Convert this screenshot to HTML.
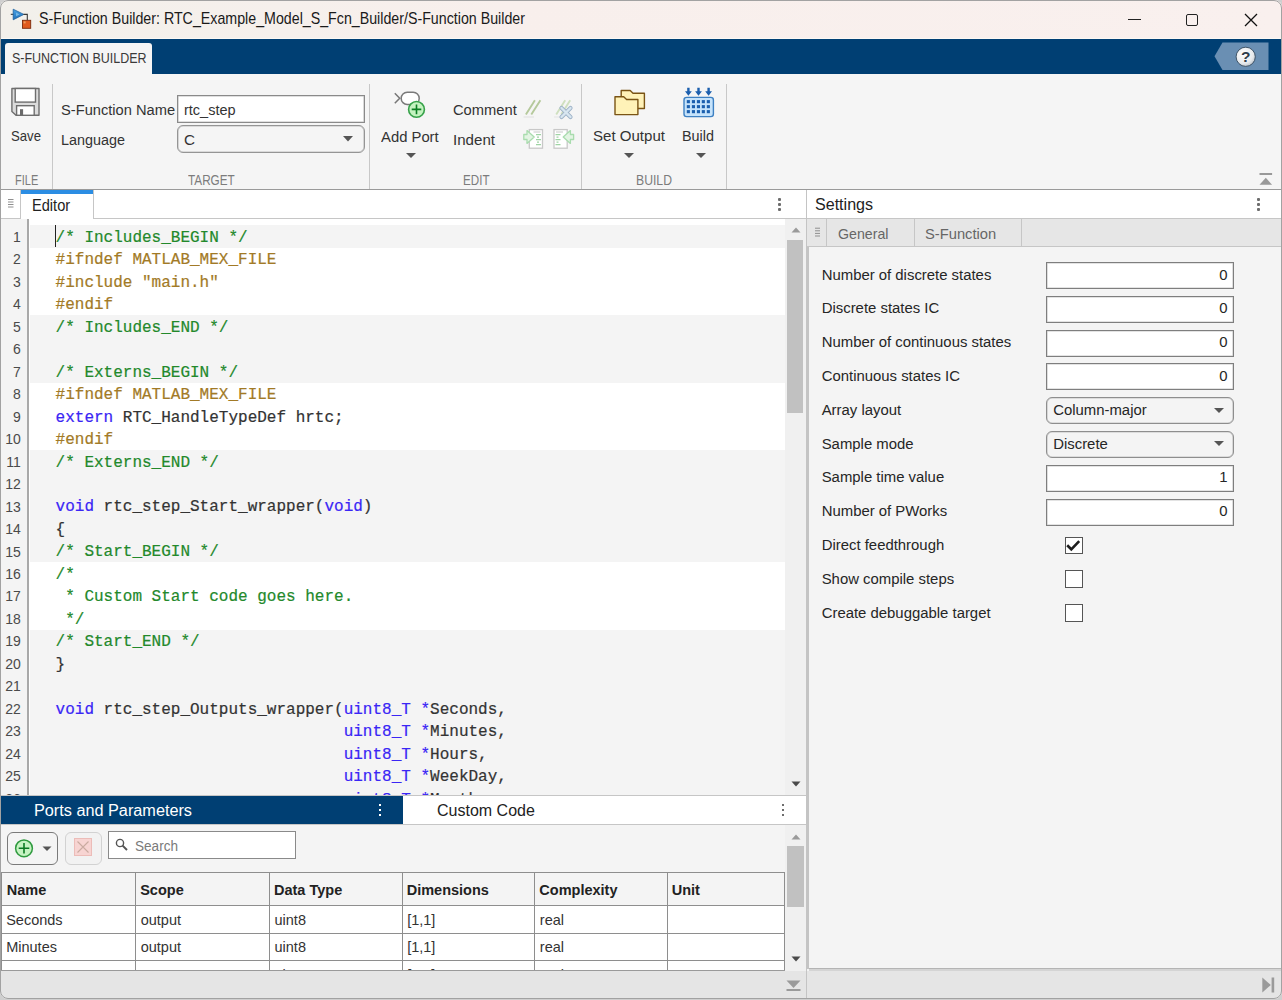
<!DOCTYPE html>
<html><head><meta charset="utf-8">
<style>
*{box-sizing:border-box;margin:0;padding:0}
html,body{width:1282px;height:1000px;overflow:hidden;background:#cfcfcf;font-family:"Liberation Sans",sans-serif;color:#222}
.a{position:absolute}
svg{position:absolute;overflow:visible}
.t{position:absolute;white-space:pre;line-height:1}
#win{position:absolute;left:0;top:0;width:1282px;height:999px;border-radius:8px;overflow:hidden;background:#f4f4f4}
#frame{position:absolute;left:0;top:0;width:1282px;height:999px;border:1px solid #a2a2a2;border-radius:8px;pointer-events:none}
</style></head><body>
<div id="win">
<div class="a" style="left:0px;top:0px;width:1282px;height:38px;background:linear-gradient(90deg,#f2f0eb 0%,#f6f0ec 22%,#f8efec 40%,#f9f0ee 100%);"></div>
<svg style="left:9px;top:8px" width="24" height="22" viewBox="0 0 24 22">
  <defs><linearGradient id="tg" x1="0" y1="0" x2="0" y2="1"><stop offset="0" stop-color="#4aa3e6"/><stop offset="1" stop-color="#1f6fb8"/></linearGradient></defs>
  <path d="M1.8 6.4 H5" stroke="#555" stroke-width="1.1"/>
  <path d="M4.2 1.2 L14.8 6.4 L4.2 11.8 Z" fill="url(#tg)" stroke="#1d5f9e" stroke-width="0.8"/>
  <path d="M7 4.5 L10.5 6.4 L7 8.3 Z" fill="#8cc8f0" opacity="0.7"/>
  <path d="M14.5 6.4 H18.3 V12.2" stroke="#3a3a3a" stroke-width="1.1" fill="none"/>
  <rect x="13.5" y="12.3" width="8.2" height="8" fill="#e05a1e" stroke="#7a2a0c" stroke-width="0.9"/>
  <rect x="14.6" y="13.4" width="2" height="2" fill="#f0b070" opacity="0.8"/>
</svg>
<div class="t" style="left:38.60px;top:11.07px;font-size:16.57px;color:#1a1a1a;transform:scaleX(0.8588);transform-origin:0 0;">S-Function Builder: RTC_Example_Model_S_Fcn_Builder/S-Function Builder</div>
<div class="a" style="left:1128px;top:19px;width:13px;height:1px;background:#222;"></div>
<div class="a" style="left:1186px;top:14px;width:12px;height:12px;border:1.3px solid #222;border-radius:2px;"></div>
<svg style="left:1244px;top:13px" width="14" height="14" viewBox="0 0 14 14"><path d="M1 1 L13 13 M13 1 L1 13" stroke="#111" stroke-width="1.3"/></svg>
<div class="a" style="left:0px;top:38px;width:1282px;height:1px;background:#fbf8f4;"></div>
<div class="a" style="left:0px;top:39px;width:1282px;height:35px;background:#003f73;"></div>
<div class="a" style="left:5px;top:43px;width:147px;height:31px;background:#f5f5f5;border-radius:3px 3px 0 0;"></div>
<div class="t" style="left:11.50px;top:50.63px;font-size:14.97px;color:#3a3a3a;transform:scaleX(0.8336);transform-origin:0 0;">S-FUNCTION BUILDER</div>
<svg style="left:1214px;top:42px" width="55" height="29" viewBox="0 0 55 29">
  <path d="M8.5 0.5 H54.5 V28 H8.5 L0.5 14.3 Z" fill="#6a8fb3"/>
  <defs><radialGradient id="hg" cx="0.4" cy="0.35" r="0.7"><stop offset="0" stop-color="#ffffff"/><stop offset="0.7" stop-color="#e6e9ec"/><stop offset="1" stop-color="#b9c0c7"/></radialGradient></defs>
  <circle cx="31.7" cy="14.8" r="9.6" fill="url(#hg)" stroke="#34495e" stroke-width="0.9"/>
  <text x="31.7" y="20.2" text-anchor="middle" font-family="Liberation Sans" font-weight="bold" font-size="15.5" fill="#2c3b4a">?</text>
</svg>
<div class="a" style="left:0px;top:74px;width:1282px;height:116px;background:#f5f5f5;border-bottom:1px solid #9a9a9a;"></div>
<div class="a" style="left:52px;top:84px;width:1px;height:105px;background:#c8c8c8;"></div>
<div class="a" style="left:369px;top:84px;width:1px;height:105px;background:#c8c8c8;"></div>
<div class="a" style="left:581px;top:84px;width:1px;height:105px;background:#c8c8c8;"></div>
<div class="a" style="left:726px;top:84px;width:1px;height:105px;background:#c8c8c8;"></div>
<svg style="left:8px;top:84px" width="36" height="36" viewBox="0 0 36 36">
 <path d="M3.9 4.5 H31 V31.3 H8 L3.9 27.5 Z" fill="#dcdcdc" stroke="#6e6e6e" stroke-width="1.4" stroke-linejoin="round"/>
 <rect x="7.2" y="4.5" width="20.3" height="13.6" fill="#fff" stroke="#6e6e6e" stroke-width="1.4"/>
 <rect x="8.6" y="21.7" width="17.6" height="9.6" fill="#fff" stroke="#6e6e6e" stroke-width="1.4"/>
 <rect x="12" y="25.2" width="3.1" height="6" fill="#6a6a6a"/>
</svg>
<div class="t" style="left:11.00px;top:129.33px;font-size:14.97px;color:#333;transform:scaleX(0.8789);transform-origin:0 0;">Save</div>
<div class="t" style="left:15.00px;top:172.82px;font-size:14.39px;color:#7c7c7c;transform:scaleX(0.7665);transform-origin:0 0;">FILE</div>
<div class="t" style="left:60.60px;top:102.08px;font-size:15.26px;color:#333;transform:scaleX(0.9618);transform-origin:0 0;">S-Function Name</div>
<div class="t" style="left:61.00px;top:132.08px;font-size:15.26px;color:#333;transform:scaleX(0.9424);transform-origin:0 0;">Language</div>
<div class="a" style="left:177px;top:95px;width:188px;height:28px;background:#fff;border:1px solid #8a8a8a;box-shadow:inset 0 0 0 0.6px rgba(0,0,0,0.25);"></div>
<div class="t" style="left:184.00px;top:102.08px;font-size:15.26px;color:#333;transform:scaleX(0.9504);transform-origin:0 0;">rtc_step</div>
<div class="a" style="left:177px;top:125px;width:188px;height:28px;background:#f5f5f5;border:1px solid #959595;border-radius:6px;box-shadow:inset 0 0 0 0.6px rgba(0,0,0,0.22);"></div>
<div class="t" style="left:184.00px;top:132.08px;font-size:15.26px;color:#333;">C</div>
<svg style="left:343px;top:136px" width="10" height="6" viewBox="0 0 10 6"><path d="M0 0 H10 L5 5.5 Z" fill="#555"/></svg>
<div class="t" style="left:187.50px;top:172.92px;font-size:14.39px;color:#7c7c7c;transform:scaleX(0.8167);transform-origin:0 0;">TARGET</div>
<svg style="left:390px;top:86px" width="40" height="36" viewBox="0 0 40 36">
 <path d="M4.8 7.3 L9.7 12.3 L4.8 17.3" stroke="#777" stroke-width="1.5" fill="none"/>
 <rect x="11.2" y="6.2" width="18" height="12.2" rx="6" fill="#fff" stroke="#7a7a7a" stroke-width="1.5"/>
 <circle cx="26.5" cy="23.4" r="7.9" fill="#c4f3c0" stroke="#37a24a" stroke-width="1.6"/>
 <path d="M26.5 18.6 V28.2 M21.7 23.4 H31.3" stroke="#0b7f22" stroke-width="1.6"/>
</svg>
<div class="t" style="left:381.00px;top:128.88px;font-size:15.26px;color:#333;transform:scaleX(0.9719);transform-origin:0 0;">Add Port</div>
<svg style="left:406px;top:153px" width="10" height="6" viewBox="0 0 10 6"><path d="M0 0 H10 L5 5 Z" fill="#555"/></svg>
<div class="t" style="left:453.20px;top:102.18px;font-size:15.26px;color:#333;transform:scaleX(0.9643);transform-origin:0 0;">Comment</div>
<div class="t" style="left:453.00px;top:131.68px;font-size:15.26px;color:#333;transform:scaleX(0.9899);transform-origin:0 0;">Indent</div>
<div class="t" style="left:463.00px;top:172.92px;font-size:14.39px;color:#7c7c7c;transform:scaleX(0.8086);transform-origin:0 0;">EDIT</div>
<svg style="left:520px;top:96px" width="58" height="26" viewBox="0 0 58 26">
 <path d="M3.6 21 H14" stroke="#e2e2e2" stroke-width="1.2"/>
 <path d="M5.9 18.6 L14.9 4.3 M11.3 18.6 L20.4 4.3" stroke="#b5c99b" stroke-width="1.9"/>
 <path d="M34 21 H40" stroke="#e6e6e6" stroke-width="1.2"/>
 <path d="M36.2 18.6 L45.2 4.3 M41.2 18.6 L50.2 4.3" stroke="#cfe0bf" stroke-width="1.9"/>
 <path d="M41.5 12 L50.5 21 M50.5 12 L41.5 21" stroke="#9fb3c8" stroke-width="4.2" stroke-linecap="round"/>
 <path d="M41.5 12 L50.5 21 M50.5 12 L41.5 21" stroke="#d8e6f0" stroke-width="2.4" stroke-linecap="round"/>
</svg>
<svg style="left:520px;top:126px" width="58" height="26" viewBox="0 0 58 26">
 <rect x="9.3" y="3.6" width="13.2" height="18.6" fill="#fff" stroke="#c8c8c8" stroke-width="1.3"/>
 <path d="M13.5 6 H20.5" stroke="#d0d0d0" stroke-width="1.2"/>
 <path d="M16 8.6 H21 M17 11.1 H19 M16 13.6 H21 M17 16.1 H19 M16 18.6 H21" stroke="#9fd3a4" stroke-width="1.4"/>
 <path d="M3.8 8.5 H7 V4.6 L14.2 11 L7 17.4 V13.5 H3.8 Z" fill="#e3f4e3" stroke="#a9dcae" stroke-width="1.3" stroke-linejoin="round"/>
 <rect x="34" y="3.6" width="13.2" height="18.6" fill="#fff" stroke="#c8c8c8" stroke-width="1.3"/>
 <path d="M36 6 H43" stroke="#d0d0d0" stroke-width="1.2"/>
 <path d="M35.5 8.6 H40.5 M36.5 11.1 H38.5 M35.5 13.6 H40.5 M36.5 16.1 H38.5 M35.5 18.6 H40.5" stroke="#9fd3a4" stroke-width="1.4"/>
 <path d="M53.6 8.5 H50.4 V4.6 L43.2 11 L50.4 17.4 V13.5 H53.6 Z" fill="#e3f4e3" stroke="#a9dcae" stroke-width="1.3" stroke-linejoin="round"/>
</svg>
<svg style="left:610px;top:84px" width="40" height="36" viewBox="0 0 40 36">
 <path d="M11.2 24.5 V6.5 H20.2 L23 9.2 H34.4 V24.5 Z" fill="#fff2b8" stroke="#7a5414" stroke-width="1.4" stroke-linejoin="round"/>
 <path d="M5 30.6 V12.8 H13.7 L16.6 15.5 H27.9 V30.6 Z" fill="#fff2b8" stroke="#7a5414" stroke-width="1.4" stroke-linejoin="round"/>
</svg>
<div class="t" style="left:593.00px;top:128.28px;font-size:15.26px;color:#333;transform:scaleX(0.9870);transform-origin:0 0;">Set Output</div>
<svg style="left:624px;top:153px" width="10" height="6" viewBox="0 0 10 6"><path d="M0 0 H10 L5 5 Z" fill="#555"/></svg>
<svg style="left:678px;top:84px" width="40" height="36" viewBox="0 0 40 36">
 <rect x="6" y="13.4" width="29.4" height="19.2" rx="2.6" fill="#c6e3fb" stroke="#3d80c2" stroke-width="1.4"/>
 <rect x="8.8" y="16.1" width="3.1" height="3.1" fill="#1b5fae"/><rect x="8.8" y="21.1" width="3.1" height="3.1" fill="#1b5fae"/><rect x="8.8" y="26.1" width="3.1" height="3.1" fill="#1b5fae"/><rect x="13.9" y="16.1" width="3.1" height="3.1" fill="#1b5fae"/><rect x="13.9" y="21.1" width="3.1" height="3.1" fill="#1b5fae"/><rect x="13.9" y="26.1" width="3.1" height="3.1" fill="#1b5fae"/><rect x="18.9" y="16.1" width="3.1" height="3.1" fill="#1b5fae"/><rect x="18.9" y="21.1" width="3.1" height="3.1" fill="#1b5fae"/><rect x="18.9" y="26.1" width="3.1" height="3.1" fill="#1b5fae"/><rect x="23.8" y="16.1" width="3.1" height="3.1" fill="#1b5fae"/><rect x="23.8" y="21.1" width="3.1" height="3.1" fill="#1b5fae"/><rect x="23.8" y="26.1" width="3.1" height="3.1" fill="#1b5fae"/><rect x="28.8" y="16.1" width="3.1" height="3.1" fill="#1b5fae"/><rect x="28.8" y="21.1" width="3.1" height="3.1" fill="#1b5fae"/><rect x="28.8" y="26.1" width="3.1" height="3.1" fill="#1b5fae"/>
 <g fill="#1b5fae" stroke="#1b5fae" stroke-width="2.4"><path d="M10.4 3.8 V10 M20.5 3.8 V10 M30.6 3.8 V10"/></g>
 <g fill="#1b5fae"><path d="M7 7.2 H13.8 L10.4 11.8 Z M17.1 7.2 H23.9 L20.5 11.8 Z M27.2 7.2 H34 L30.6 11.8 Z"/></g>
</svg>
<div class="t" style="left:682.00px;top:128.28px;font-size:15.26px;color:#333;transform:scaleX(0.9434);transform-origin:0 0;">Build</div>
<svg style="left:695.5px;top:153px" width="10" height="6" viewBox="0 0 10 6"><path d="M0 0 H10 L5 5 Z" fill="#555"/></svg>
<div class="t" style="left:636.00px;top:172.92px;font-size:14.39px;color:#7c7c7c;transform:scaleX(0.8495);transform-origin:0 0;">BUILD</div>
<svg style="left:1259px;top:172px" width="14" height="14" viewBox="0 0 14 14"><rect x="0.5" y="1" width="12.6" height="2" fill="#999"/><path d="M0.5 12.8 L6.8 5.8 L13.1 12.8 Z" fill="#999"/></svg>
<div class="a" style="left:0px;top:190px;width:806px;height:29px;background:#fff;border-bottom:1px solid #c6c6c6;"></div>
<div class="a" style="left:1px;top:190px;width:20px;height:29px;background:#fff;border-right:1px solid #c6c6c6;border-bottom:1px solid #c6c6c6;"></div>
<svg style="left:8px;top:198px" width="6" height="10" viewBox="0 0 6 10"><path d="M0 1.5 H5.5 M0 4 H5.5 M0 6.5 H5.5 M0 9 H5.5" stroke="#8f8f8f" stroke-width="1"/></svg>
<div class="a" style="left:21px;top:190px;width:73px;height:29px;background:#fff;border-right:1px solid #c6c6c6;"></div>
<div class="a" style="left:21px;top:190px;width:72px;height:4px;background:#2b8de3;"></div>
<div class="t" style="left:31.60px;top:198.19px;font-size:15.84px;color:#222;transform:scaleX(0.9229);transform-origin:0 0;">Editor</div>
<div class="a" style="left:778.3px;top:197.8px;width:2.8px;height:2.8px;background:#6d6d6d;border-radius:1px;"></div>
<div class="a" style="left:778.3px;top:202.8px;width:2.8px;height:2.8px;background:#6d6d6d;border-radius:1px;"></div>
<div class="a" style="left:778.3px;top:207.8px;width:2.8px;height:2.8px;background:#6d6d6d;border-radius:1px;"></div>
<div class="a" style="left:0px;top:219px;width:785px;height:578px;background:#fff;"></div>
<div class="a" style="left:1px;top:219px;width:27px;height:578px;background:#f4f4f4;"></div>
<div class="a" style="left:27px;top:219px;width:2px;height:578px;background:#a9a9a9;"></div>
<div class="a" style="left:29.5px;top:225.10px;width:755.5px;height:22.77px;background:#f4f4f4"></div>
<div class="a" style="left:29.5px;top:314.98px;width:755.5px;height:22.77px;background:#f4f4f4"></div>
<div class="a" style="left:29.5px;top:337.45px;width:755.5px;height:22.77px;background:#f4f4f4"></div>
<div class="a" style="left:29.5px;top:359.92px;width:755.5px;height:22.77px;background:#f4f4f4"></div>
<div class="a" style="left:29.5px;top:449.80px;width:755.5px;height:22.77px;background:#f4f4f4"></div>
<div class="a" style="left:29.5px;top:472.27px;width:755.5px;height:22.77px;background:#f4f4f4"></div>
<div class="a" style="left:29.5px;top:494.74px;width:755.5px;height:22.77px;background:#f4f4f4"></div>
<div class="a" style="left:29.5px;top:517.21px;width:755.5px;height:22.77px;background:#f4f4f4"></div>
<div class="a" style="left:29.5px;top:539.68px;width:755.5px;height:22.77px;background:#f4f4f4"></div>
<div class="a" style="left:29.5px;top:629.56px;width:755.5px;height:22.77px;background:#f4f4f4"></div>
<div class="a" style="left:29.5px;top:652.03px;width:755.5px;height:22.77px;background:#f4f4f4"></div>
<div class="a" style="left:29.5px;top:674.50px;width:755.5px;height:22.77px;background:#f4f4f4"></div>
<div class="a" style="left:29.5px;top:696.97px;width:755.5px;height:22.77px;background:#f4f4f4"></div>
<div class="a" style="left:29.5px;top:719.44px;width:755.5px;height:22.77px;background:#f4f4f4"></div>
<div class="a" style="left:29.5px;top:741.91px;width:755.5px;height:22.77px;background:#f4f4f4"></div>
<div class="a" style="left:29.5px;top:764.38px;width:755.5px;height:22.77px;background:#f4f4f4"></div>
<div class="a" style="left:29.5px;top:786.85px;width:755.5px;height:22.77px;background:#f4f4f4"></div>
<div class="a" style="left:54.8px;top:225.2px;width:1.6px;height:21.5px;background:#222;"></div>
<div class="t" style="left:55.6px;top:229.84px;font-family:'Liberation Mono',monospace;font-size:16px;transform:scaleY(1.08);-webkit-text-stroke:0.2px currentColor;transform-origin:0 12.26px"><span style="color:#23892b">/* Includes_BEGIN */</span></div>
<div class="t" style="right:1261.20px;top:229.95px;font-size:14px;color:#4a4a4a">1</div>
<div class="t" style="left:55.6px;top:252.31px;font-family:'Liberation Mono',monospace;font-size:16px;transform:scaleY(1.08);-webkit-text-stroke:0.2px currentColor;transform-origin:0 12.26px"><span style="color:#a27a26">#ifndef MATLAB_MEX_FILE</span></div>
<div class="t" style="right:1261.20px;top:252.42px;font-size:14px;color:#4a4a4a">2</div>
<div class="t" style="left:55.6px;top:274.78px;font-family:'Liberation Mono',monospace;font-size:16px;transform:scaleY(1.08);-webkit-text-stroke:0.2px currentColor;transform-origin:0 12.26px"><span style="color:#a27a26">#include &quot;main.h&quot;</span></div>
<div class="t" style="right:1261.20px;top:274.89px;font-size:14px;color:#4a4a4a">3</div>
<div class="t" style="left:55.6px;top:297.25px;font-family:'Liberation Mono',monospace;font-size:16px;transform:scaleY(1.08);-webkit-text-stroke:0.2px currentColor;transform-origin:0 12.26px"><span style="color:#a27a26">#endif</span></div>
<div class="t" style="right:1261.20px;top:297.36px;font-size:14px;color:#4a4a4a">4</div>
<div class="t" style="left:55.6px;top:319.72px;font-family:'Liberation Mono',monospace;font-size:16px;transform:scaleY(1.08);-webkit-text-stroke:0.2px currentColor;transform-origin:0 12.26px"><span style="color:#23892b">/* Includes_END */</span></div>
<div class="t" style="right:1261.20px;top:319.83px;font-size:14px;color:#4a4a4a">5</div>
<div class="t" style="left:55.6px;top:342.19px;font-family:'Liberation Mono',monospace;font-size:16px;transform:scaleY(1.08);-webkit-text-stroke:0.2px currentColor;transform-origin:0 12.26px"></div>
<div class="t" style="right:1261.20px;top:342.30px;font-size:14px;color:#4a4a4a">6</div>
<div class="t" style="left:55.6px;top:364.66px;font-family:'Liberation Mono',monospace;font-size:16px;transform:scaleY(1.08);-webkit-text-stroke:0.2px currentColor;transform-origin:0 12.26px"><span style="color:#23892b">/* Externs_BEGIN */</span></div>
<div class="t" style="right:1261.20px;top:364.77px;font-size:14px;color:#4a4a4a">7</div>
<div class="t" style="left:55.6px;top:387.13px;font-family:'Liberation Mono',monospace;font-size:16px;transform:scaleY(1.08);-webkit-text-stroke:0.2px currentColor;transform-origin:0 12.26px"><span style="color:#a27a26">#ifndef MATLAB_MEX_FILE</span></div>
<div class="t" style="right:1261.20px;top:387.24px;font-size:14px;color:#4a4a4a">8</div>
<div class="t" style="left:55.6px;top:409.60px;font-family:'Liberation Mono',monospace;font-size:16px;transform:scaleY(1.08);-webkit-text-stroke:0.2px currentColor;transform-origin:0 12.26px"><span style="color:#3a26f4">extern</span><span style="color:#333333"> RTC_HandleTypeDef hrtc;</span></div>
<div class="t" style="right:1261.20px;top:409.71px;font-size:14px;color:#4a4a4a">9</div>
<div class="t" style="left:55.6px;top:432.07px;font-family:'Liberation Mono',monospace;font-size:16px;transform:scaleY(1.08);-webkit-text-stroke:0.2px currentColor;transform-origin:0 12.26px"><span style="color:#a27a26">#endif</span></div>
<div class="t" style="right:1261.20px;top:432.18px;font-size:14px;color:#4a4a4a">10</div>
<div class="t" style="left:55.6px;top:454.54px;font-family:'Liberation Mono',monospace;font-size:16px;transform:scaleY(1.08);-webkit-text-stroke:0.2px currentColor;transform-origin:0 12.26px"><span style="color:#23892b">/* Externs_END */</span></div>
<div class="t" style="right:1261.20px;top:454.65px;font-size:14px;color:#4a4a4a">11</div>
<div class="t" style="left:55.6px;top:477.01px;font-family:'Liberation Mono',monospace;font-size:16px;transform:scaleY(1.08);-webkit-text-stroke:0.2px currentColor;transform-origin:0 12.26px"></div>
<div class="t" style="right:1261.20px;top:477.12px;font-size:14px;color:#4a4a4a">12</div>
<div class="t" style="left:55.6px;top:499.48px;font-family:'Liberation Mono',monospace;font-size:16px;transform:scaleY(1.08);-webkit-text-stroke:0.2px currentColor;transform-origin:0 12.26px"><span style="color:#3a26f4">void</span><span style="color:#333333"> rtc_step_Start_wrapper(</span><span style="color:#3a26f4">void</span><span style="color:#333333">)</span></div>
<div class="t" style="right:1261.20px;top:499.59px;font-size:14px;color:#4a4a4a">13</div>
<div class="t" style="left:55.6px;top:521.95px;font-family:'Liberation Mono',monospace;font-size:16px;transform:scaleY(1.08);-webkit-text-stroke:0.2px currentColor;transform-origin:0 12.26px"><span style="color:#333333">{</span></div>
<div class="t" style="right:1261.20px;top:522.06px;font-size:14px;color:#4a4a4a">14</div>
<div class="t" style="left:55.6px;top:544.42px;font-family:'Liberation Mono',monospace;font-size:16px;transform:scaleY(1.08);-webkit-text-stroke:0.2px currentColor;transform-origin:0 12.26px"><span style="color:#23892b">/* Start_BEGIN */</span></div>
<div class="t" style="right:1261.20px;top:544.53px;font-size:14px;color:#4a4a4a">15</div>
<div class="t" style="left:55.6px;top:566.89px;font-family:'Liberation Mono',monospace;font-size:16px;transform:scaleY(1.08);-webkit-text-stroke:0.2px currentColor;transform-origin:0 12.26px"><span style="color:#23892b">/*</span></div>
<div class="t" style="right:1261.20px;top:567.00px;font-size:14px;color:#4a4a4a">16</div>
<div class="t" style="left:55.6px;top:589.36px;font-family:'Liberation Mono',monospace;font-size:16px;transform:scaleY(1.08);-webkit-text-stroke:0.2px currentColor;transform-origin:0 12.26px"><span style="color:#23892b"> * Custom Start code goes here.</span></div>
<div class="t" style="right:1261.20px;top:589.47px;font-size:14px;color:#4a4a4a">17</div>
<div class="t" style="left:55.6px;top:611.83px;font-family:'Liberation Mono',monospace;font-size:16px;transform:scaleY(1.08);-webkit-text-stroke:0.2px currentColor;transform-origin:0 12.26px"><span style="color:#23892b"> */</span></div>
<div class="t" style="right:1261.20px;top:611.94px;font-size:14px;color:#4a4a4a">18</div>
<div class="t" style="left:55.6px;top:634.30px;font-family:'Liberation Mono',monospace;font-size:16px;transform:scaleY(1.08);-webkit-text-stroke:0.2px currentColor;transform-origin:0 12.26px"><span style="color:#23892b">/* Start_END */</span></div>
<div class="t" style="right:1261.20px;top:634.41px;font-size:14px;color:#4a4a4a">19</div>
<div class="t" style="left:55.6px;top:656.77px;font-family:'Liberation Mono',monospace;font-size:16px;transform:scaleY(1.08);-webkit-text-stroke:0.2px currentColor;transform-origin:0 12.26px"><span style="color:#333333">}</span></div>
<div class="t" style="right:1261.20px;top:656.88px;font-size:14px;color:#4a4a4a">20</div>
<div class="t" style="left:55.6px;top:679.24px;font-family:'Liberation Mono',monospace;font-size:16px;transform:scaleY(1.08);-webkit-text-stroke:0.2px currentColor;transform-origin:0 12.26px"></div>
<div class="t" style="right:1261.20px;top:679.35px;font-size:14px;color:#4a4a4a">21</div>
<div class="t" style="left:55.6px;top:701.71px;font-family:'Liberation Mono',monospace;font-size:16px;transform:scaleY(1.08);-webkit-text-stroke:0.2px currentColor;transform-origin:0 12.26px"><span style="color:#3a26f4">void</span><span style="color:#333333"> rtc_step_Outputs_wrapper(</span><span style="color:#3a26f4">uint8_T</span><span style="color:#333333"> </span><span style="color:#3a26f4">*</span><span style="color:#333333">Seconds,</span></div>
<div class="t" style="right:1261.20px;top:701.82px;font-size:14px;color:#4a4a4a">22</div>
<div class="t" style="left:55.6px;top:724.18px;font-family:'Liberation Mono',monospace;font-size:16px;transform:scaleY(1.08);-webkit-text-stroke:0.2px currentColor;transform-origin:0 12.26px"><span style="color:#333333">                              </span><span style="color:#3a26f4">uint8_T</span><span style="color:#333333"> </span><span style="color:#3a26f4">*</span><span style="color:#333333">Minutes,</span></div>
<div class="t" style="right:1261.20px;top:724.29px;font-size:14px;color:#4a4a4a">23</div>
<div class="t" style="left:55.6px;top:746.65px;font-family:'Liberation Mono',monospace;font-size:16px;transform:scaleY(1.08);-webkit-text-stroke:0.2px currentColor;transform-origin:0 12.26px"><span style="color:#333333">                              </span><span style="color:#3a26f4">uint8_T</span><span style="color:#333333"> </span><span style="color:#3a26f4">*</span><span style="color:#333333">Hours,</span></div>
<div class="t" style="right:1261.20px;top:746.76px;font-size:14px;color:#4a4a4a">24</div>
<div class="t" style="left:55.6px;top:769.12px;font-family:'Liberation Mono',monospace;font-size:16px;transform:scaleY(1.08);-webkit-text-stroke:0.2px currentColor;transform-origin:0 12.26px"><span style="color:#333333">                              </span><span style="color:#3a26f4">uint8_T</span><span style="color:#333333"> </span><span style="color:#3a26f4">*</span><span style="color:#333333">WeekDay,</span></div>
<div class="t" style="right:1261.20px;top:769.23px;font-size:14px;color:#4a4a4a">25</div>
<div class="t" style="left:55.6px;top:791.59px;font-family:'Liberation Mono',monospace;font-size:16px;transform:scaleY(1.08);-webkit-text-stroke:0.2px currentColor;transform-origin:0 12.26px"><span style="color:#333333">                              </span><span style="color:#3a26f4">uint8_T</span><span style="color:#333333"> </span><span style="color:#3a26f4">*</span><span style="color:#333333">Month,</span></div>
<div class="t" style="right:1261.20px;top:791.70px;font-size:14px;color:#4a4a4a">26</div>
<div class="a" style="left:785px;top:219px;width:21px;height:578px;background:#f0f0f0;"></div>
<svg style="left:791px;top:227px" width="10" height="6" viewBox="0 0 10 6"><path d="M0.5 5.5 H9.5 L5 0.5 Z" fill="#9a9a9a"/></svg>
<div class="a" style="left:787px;top:240px;width:16px;height:173px;background:#c1c1c1;"></div>
<svg style="left:791px;top:781px" width="10" height="6" viewBox="0 0 10 6"><path d="M0.5 0.5 H9.5 L5 5.5 Z" fill="#4a4a4a"/></svg>
<div class="a" style="left:0px;top:795px;width:806px;height:1px;background:#c6c6c6;"></div>
<div class="a" style="left:0px;top:796px;width:806px;height:29px;background:#fff;border-bottom:1px solid #c6c6c6;"></div>
<div class="a" style="left:0px;top:796px;width:403px;height:28px;background:#003f73;"></div>
<div class="t" style="left:33.90px;top:803.16px;font-size:16.00px;color:#ffffff;transform:scaleX(1.0152);transform-origin:0 0;">Ports and Parameters</div>
<div class="a" style="left:378.9px;top:804px;width:2.2px;height:2.2px;background:#ffffff;"></div>
<div class="a" style="left:378.9px;top:809px;width:2.2px;height:2.2px;background:#ffffff;"></div>
<div class="a" style="left:378.9px;top:814px;width:2.2px;height:2.2px;background:#ffffff;"></div>
<div class="t" style="left:437.00px;top:802.56px;font-size:16.00px;color:#222;">Custom Code</div>
<div class="a" style="left:782.2px;top:804px;width:2.3px;height:2.3px;background:#6d6d6d;"></div>
<div class="a" style="left:782.2px;top:809px;width:2.3px;height:2.3px;background:#6d6d6d;"></div>
<div class="a" style="left:782.2px;top:814px;width:2.3px;height:2.3px;background:#6d6d6d;"></div>
<div class="a" style="left:0px;top:825px;width:785px;height:146px;background:#f4f4f4;"></div>
<div class="a" style="left:7px;top:832px;width:51px;height:33px;background:#f4f4f4;border:1px solid #7a7a7a;border-radius:6px;"></div>
<svg style="left:14px;top:838px" width="22" height="22" viewBox="0 0 22 22">
 <circle cx="10" cy="10.3" r="8.4" fill="#c6f3c2" stroke="#2f9a3f" stroke-width="1.5"/>
 <path d="M10 5 V15.6 M4.7 10.3 H15.3" stroke="#0b7a22" stroke-width="1.6"/></svg>
<svg style="left:42px;top:846px" width="10" height="6" viewBox="0 0 10 6"><path d="M0.5 0.5 H9.5 L5 5 Z" fill="#555"/></svg>
<div class="a" style="left:65px;top:832px;width:37px;height:33px;background:#f2f2f2;border:1px solid #d2d2d2;border-radius:6px;"></div>
<svg style="left:74px;top:838px" width="18" height="18" viewBox="0 0 18 18">
 <rect x="0.5" y="0.5" width="17" height="17" fill="#f7d4d2" stroke="#ecbcb8" stroke-width="1"/>
 <path d="M3.5 3.5 L14.5 14.5 M14.5 3.5 L3.5 14.5" stroke="#c9aaa0" stroke-width="1.1"/></svg>
<div class="a" style="left:108px;top:831px;width:188px;height:28px;background:#fff;border:1px solid #8a8a8a;"></div>
<svg style="left:115px;top:838px" width="14" height="14" viewBox="0 0 14 14">
 <circle cx="5" cy="5" r="3.6" fill="none" stroke="#555" stroke-width="1.4"/>
 <path d="M7.6 7.6 L12 12" stroke="#555" stroke-width="2"/></svg>
<div class="t" style="left:135.00px;top:838.38px;font-size:15.50px;color:#7a7a7a;transform:scaleX(0.8758);transform-origin:0 0;">Search</div>
<div class="a" style="left:1px;top:872px;width:784px;height:99px;background:#fff;"></div>
<div class="a" style="left:1px;top:872px;width:784px;height:34px;background:#f4f4f4;"></div>
<div class="a" style="left:1px;top:872px;width:784px;height:1px;background:#8e8e8e"></div>
<div class="a" style="left:1px;top:905px;width:784px;height:1px;background:#8e8e8e"></div>
<div class="a" style="left:1px;top:933px;width:784px;height:1px;background:#8e8e8e"></div>
<div class="a" style="left:1px;top:960px;width:784px;height:1px;background:#8e8e8e"></div>
<div class="a" style="left:1px;top:872px;width:1px;height:99px;background:#8e8e8e"></div>
<div class="a" style="left:135px;top:872px;width:1px;height:99px;background:#8e8e8e"></div>
<div class="a" style="left:269px;top:872px;width:1px;height:99px;background:#8e8e8e"></div>
<div class="a" style="left:402px;top:872px;width:1px;height:99px;background:#8e8e8e"></div>
<div class="a" style="left:534px;top:872px;width:1px;height:99px;background:#8e8e8e"></div>
<div class="a" style="left:667px;top:872px;width:1px;height:99px;background:#8e8e8e"></div>
<div class="a" style="left:784px;top:872px;width:1px;height:99px;background:#8e8e8e"></div>
<div class="t" style="left:6.80px;top:882.53px;font-size:14.50px;color:#222;font-weight:bold;">Name</div>
<div class="t" style="left:140.20px;top:882.53px;font-size:14.50px;color:#222;font-weight:bold;">Scope</div>
<div class="t" style="left:274.00px;top:882.53px;font-size:14.50px;color:#222;font-weight:bold;">Data Type</div>
<div class="t" style="left:406.70px;top:882.53px;font-size:14.50px;color:#222;font-weight:bold;">Dimensions</div>
<div class="t" style="left:539.30px;top:882.53px;font-size:14.50px;color:#222;font-weight:bold;">Complexity</div>
<div class="t" style="left:671.70px;top:882.53px;font-size:14.50px;color:#222;font-weight:bold;">Unit</div>
<div class="t" style="left:6.20px;top:912.53px;font-size:14.50px;color:#333;">Seconds</div>
<div class="t" style="left:140.70px;top:912.53px;font-size:14.50px;color:#333;">output</div>
<div class="t" style="left:274.50px;top:912.53px;font-size:14.50px;color:#333;">uint8</div>
<div class="t" style="left:407.20px;top:912.53px;font-size:14.50px;color:#333;">[1,1]</div>
<div class="t" style="left:539.80px;top:912.53px;font-size:14.50px;color:#333;">real</div>
<div class="t" style="left:6.20px;top:940.33px;font-size:14.50px;color:#333;">Minutes</div>
<div class="t" style="left:140.70px;top:940.33px;font-size:14.50px;color:#333;">output</div>
<div class="t" style="left:274.50px;top:940.33px;font-size:14.50px;color:#333;">uint8</div>
<div class="t" style="left:407.20px;top:940.33px;font-size:14.50px;color:#333;">[1,1]</div>
<div class="t" style="left:539.80px;top:940.33px;font-size:14.50px;color:#333;">real</div>
<div class="t" style="left:6.20px;top:968.13px;font-size:14.50px;color:#333;">Hours</div>
<div class="t" style="left:140.70px;top:968.13px;font-size:14.50px;color:#333;">output</div>
<div class="t" style="left:274.50px;top:968.13px;font-size:14.50px;color:#333;">uint8</div>
<div class="t" style="left:407.20px;top:968.13px;font-size:14.50px;color:#333;">[1,1]</div>
<div class="t" style="left:539.80px;top:968.13px;font-size:14.50px;color:#333;">real</div>
<div class="a" style="left:0px;top:970px;width:785px;height:1px;background:#9a9a9a;"></div>
<div class="a" style="left:785px;top:825px;width:21px;height:146px;background:#f0f0f0;"></div>
<svg style="left:791px;top:834px" width="10" height="6" viewBox="0 0 10 6"><path d="M0.5 5.5 H9.5 L5 0.5 Z" fill="#9a9a9a"/></svg>
<div class="a" style="left:787px;top:846px;width:16.5px;height:60.5px;background:#c1c1c1;"></div>
<svg style="left:791px;top:956px" width="10" height="6" viewBox="0 0 10 6"><path d="M0.5 0.5 H9.5 L5 5.5 Z" fill="#4a4a4a"/></svg>
<div class="a" style="left:806px;top:190px;width:476px;height:29px;background:#fff;border-bottom:1px solid #c6c6c6;"></div>
<div class="a" style="left:806px;top:190px;width:1px;height:781px;background:#c4c4c4;"></div>
<div class="t" style="left:815.20px;top:196.96px;font-size:16.00px;color:#222;transform:scaleX(1.0035);transform-origin:0 0;">Settings</div>
<div class="a" style="left:1257px;top:198px;width:3px;height:3px;background:#6d6d6d;border-radius:1px;"></div>
<div class="a" style="left:1257px;top:203px;width:3px;height:3px;background:#6d6d6d;border-radius:1px;"></div>
<div class="a" style="left:1257px;top:208px;width:3px;height:3px;background:#6d6d6d;border-radius:1px;"></div>
<div class="a" style="left:807px;top:219px;width:475px;height:28px;background:#e6e6e6;border-bottom:1px solid #c6c6c6;"></div>
<div class="a" style="left:826px;top:219px;width:1px;height:28px;background:#c6c6c6;"></div>
<svg style="left:815px;top:227px" width="6" height="10" viewBox="0 0 6 10"><path d="M0 1.2 H5 M0 3.8 H5 M0 6.4 H5 M0 9 H5" stroke="#8f8f8f" stroke-width="1"/></svg>
<div class="t" style="left:837.50px;top:226.30px;font-size:15.00px;color:#666;transform:scaleX(0.9464);transform-origin:0 0;">General</div>
<div class="a" style="left:913.5px;top:219px;width:1px;height:28px;background:#c6c6c6;"></div>
<div class="t" style="left:924.70px;top:226.30px;font-size:15.00px;color:#666;transform:scaleX(0.9817);transform-origin:0 0;">S-Function</div>
<div class="a" style="left:1021px;top:219px;width:1px;height:28px;background:#c6c6c6;"></div>
<div class="a" style="left:807px;top:247px;width:2px;height:722px;background:#c4c4c4;"></div>
<div class="a" style="left:809px;top:247px;width:473px;height:721px;background:#f4f4f4;"></div>
<div class="t" style="left:821.70px;top:267.59px;font-size:14.90px;color:#262626;">Number of discrete states</div>
<div class="a" style="left:1046px;top:261.90px;width:188px;height:27px;background:#fff;border:1px solid #7e7e7e;box-shadow:inset 0 0 0 0.6px rgba(0,0,0,0.22)"></div>
<div class="t" style="left:1219.30px;top:267.59px;font-size:14.90px;color:#262626;">0</div>
<div class="t" style="left:821.70px;top:301.39px;font-size:14.90px;color:#262626;">Discrete states IC</div>
<div class="a" style="left:1046px;top:295.70px;width:188px;height:27px;background:#fff;border:1px solid #7e7e7e;box-shadow:inset 0 0 0 0.6px rgba(0,0,0,0.22)"></div>
<div class="t" style="left:1219.30px;top:301.39px;font-size:14.90px;color:#262626;">0</div>
<div class="t" style="left:821.70px;top:335.19px;font-size:14.90px;color:#262626;">Number of continuous states</div>
<div class="a" style="left:1046px;top:329.50px;width:188px;height:27px;background:#fff;border:1px solid #7e7e7e;box-shadow:inset 0 0 0 0.6px rgba(0,0,0,0.22)"></div>
<div class="t" style="left:1219.30px;top:335.19px;font-size:14.90px;color:#262626;">0</div>
<div class="t" style="left:821.70px;top:368.99px;font-size:14.90px;color:#262626;">Continuous states IC</div>
<div class="a" style="left:1046px;top:363.30px;width:188px;height:27px;background:#fff;border:1px solid #7e7e7e;box-shadow:inset 0 0 0 0.6px rgba(0,0,0,0.22)"></div>
<div class="t" style="left:1219.30px;top:368.99px;font-size:14.90px;color:#262626;">0</div>
<div class="t" style="left:821.70px;top:402.79px;font-size:14.90px;color:#262626;">Array layout</div>
<div class="a" style="left:1046px;top:397.10px;width:188px;height:27px;background:#f4f4f4;border:1px solid #8e8e8e;border-radius:6px;box-shadow:inset 0 0 0 0.6px rgba(0,0,0,0.2)"></div>
<div class="t" style="left:1053.20px;top:402.79px;font-size:14.90px;color:#262626;">Column-major</div>
<svg style="left:1213.5px;top:407.60px" width="10" height="6" viewBox="0 0 10 6"><path d="M0 0 H10 L5 5 Z" fill="#555"/></svg>
<div class="t" style="left:821.70px;top:436.59px;font-size:14.90px;color:#262626;">Sample mode</div>
<div class="a" style="left:1046px;top:430.90px;width:188px;height:27px;background:#f4f4f4;border:1px solid #8e8e8e;border-radius:6px;box-shadow:inset 0 0 0 0.6px rgba(0,0,0,0.2)"></div>
<div class="t" style="left:1053.20px;top:436.59px;font-size:14.90px;color:#262626;">Discrete</div>
<svg style="left:1213.5px;top:441.40px" width="10" height="6" viewBox="0 0 10 6"><path d="M0 0 H10 L5 5 Z" fill="#555"/></svg>
<div class="t" style="left:821.70px;top:470.39px;font-size:14.90px;color:#262626;">Sample time value</div>
<div class="a" style="left:1046px;top:464.70px;width:188px;height:27px;background:#fff;border:1px solid #7e7e7e;box-shadow:inset 0 0 0 0.6px rgba(0,0,0,0.22)"></div>
<div class="t" style="left:1219.30px;top:470.39px;font-size:14.90px;color:#262626;">1</div>
<div class="t" style="left:821.70px;top:504.19px;font-size:14.90px;color:#262626;">Number of PWorks</div>
<div class="a" style="left:1046px;top:498.50px;width:188px;height:27px;background:#fff;border:1px solid #7e7e7e;box-shadow:inset 0 0 0 0.6px rgba(0,0,0,0.22)"></div>
<div class="t" style="left:1219.30px;top:504.19px;font-size:14.90px;color:#262626;">0</div>
<div class="t" style="left:821.70px;top:537.99px;font-size:14.90px;color:#262626;">Direct feedthrough</div>
<div class="a" style="left:1065px;top:536.50px;width:17.5px;height:17.5px;background:#fff;border:1.6px solid #555"></div>
<svg style="left:1065px;top:536.50px" width="18" height="18" viewBox="0 0 18 18"><path d="M2.2 8.3 L6.3 12.3 L14.2 4.2" fill="none" stroke="#1e1e1e" stroke-width="2.6" stroke-linejoin="miter"/></svg>
<div class="t" style="left:821.70px;top:571.79px;font-size:14.90px;color:#262626;">Show compile steps</div>
<div class="a" style="left:1065px;top:570.30px;width:17.5px;height:17.5px;background:#fff;border:1.6px solid #555"></div>
<div class="t" style="left:821.70px;top:605.59px;font-size:14.90px;color:#262626;">Create debuggable target</div>
<div class="a" style="left:1065px;top:604.10px;width:17.5px;height:17.5px;background:#fff;border:1.6px solid #555"></div>
<div class="a" style="left:809px;top:968px;width:473px;height:1px;background:#b4b4b4;"></div>
<div class="a" style="left:809px;top:969px;width:473px;height:2px;background:#d4d4d4;"></div>
<div class="a" style="left:0px;top:971px;width:1282px;height:28px;background:#e5e5e5;"></div>
<div class="a" style="left:806px;top:971px;width:1px;height:28px;background:#c4c4c4;"></div>
<svg style="left:786px;top:980px" width="16" height="12" viewBox="0 0 16 12"><path d="M0.5 0.5 H14.5 L7.5 8 Z" fill="#9a9a9a"/><rect x="0.5" y="9" width="14" height="2" fill="#9a9a9a"/></svg>
<svg style="left:1261.5px;top:977px" width="14" height="16" viewBox="0 0 14 16"><path d="M0.3 0.5 L8.8 8 L0.3 15.5 Z" fill="#9a9a9a"/><rect x="9.6" y="0.5" width="2.6" height="15" fill="#9a9a9a"/></svg>
</div>
<div id="frame"></div>
</body></html>
